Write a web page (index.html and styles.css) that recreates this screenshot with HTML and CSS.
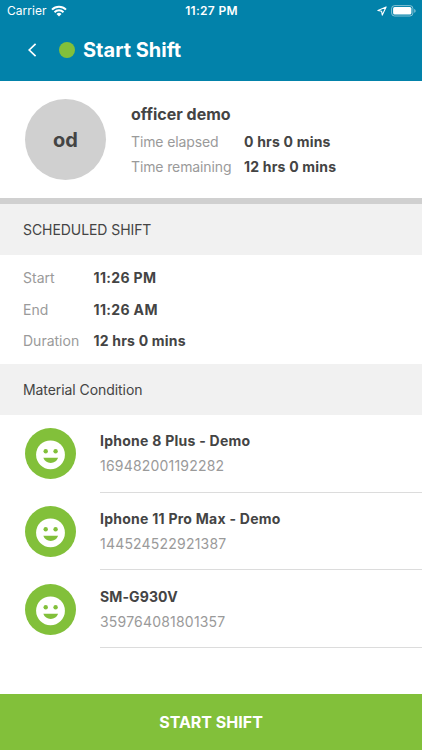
FILE: index.html
```html
<!DOCTYPE html>
<html lang="en">
<head>
<meta charset="utf-8">
<meta name="viewport" content="width=device-width, initial-scale=1">
<title>Start Shift</title>
<link rel="stylesheet" href="styles.css">
</head>
<body>
<svg class="defs" aria-hidden="true">
  <symbol id="face" viewBox="0 0 51 51">
    <circle cx="25.5" cy="25.5" r="25.5" fill="#82c03a"/>
    <circle cx="25.5" cy="26.8" r="14.4" fill="#fff"/>
    <circle cx="20.7" cy="23.3" r="2.2" fill="#82c03a"/>
    <circle cx="30.6" cy="23.3" r="2.2" fill="#82c03a"/>
    <path d="M18.3 29.7h14.8c-1.1 3.2-3.9 5.2-7.4 5.2s-6.3-2-7.4-5.2z" fill="#82c03a"/>
  </symbol>
</svg>
<div class="app">
  <header class="header">
    <div class="status">
      <div class="status-left"><span class="carrier">Carrier</span>
        <svg class="wifi" width="16" height="12" viewBox="0 0 16 12" fill="none" stroke="#fff" stroke-width="2"><path d="M1 4.6a10 10 0 0 1 14 0M3.5 7.2a6.4 6.4 0 0 1 9 0"/><path d="M8 11.6 5.5 9.1a3.5 3.5 0 0 1 5 0z" fill="#fff" stroke="none"/></svg>
      </div>
      <span class="clock">11:27 PM</span>
      <div class="status-right">
        <svg width="10" height="10" viewBox="0 0 10 10" fill="none" stroke="#fff" stroke-width="1.1" stroke-linejoin="round"><path d="M9.1.9.9 4.5l3.7.8.7 3.8z"/></svg>
        <svg width="25" height="12" viewBox="0 0 25 12"><rect x=".6" y=".6" width="21.3" height="10.4" rx="3" fill="none" stroke="#fff" stroke-opacity=".5"/><rect x="2.1" y="2.1" width="18.3" height="7.4" rx="1.5" fill="#fff"/><path d="M23.3 4v3.8c.8-.3 1.2-1 1.2-1.9s-.4-1.6-1.2-1.9z" fill="#fff" fill-opacity=".6"/></svg>
      </div>
    </div>
    <div class="nav">
      <svg class="back" width="9" height="14" viewBox="0 0 9 14" fill="none" stroke="#fff" stroke-width="1.7"><path d="M7.6.8 1.2 7l6.4 6.2"/></svg>
      <span class="dot"></span>
      <h1 class="title">Start Shift</h1>
    </div>
  </header>
  <section class="profile">
    <div class="avatar">od</div>
    <div class="info">
      <h2 class="name">officer demo</h2>
      <div class="stat"><span class="label">Time elapsed</span><span class="value">0 hrs 0 mins</span></div>
      <div class="stat"><span class="label">Time remaining</span><span class="value">12 hrs 0 mins</span></div>
    </div>
  </section>
  <h3 class="section">SCHEDULED SHIFT</h3>
  <section class="shift">
    <div class="row"><span class="label">Start</span><span class="value time">11:26 PM</span></div>
    <div class="row"><span class="label">End</span><span class="value time">11:26 AM</span></div>
    <div class="row"><span class="label">Duration</span><span class="value">12 hrs 0 mins</span></div>
  </section>
  <h3 class="section">Material Condition</h3>
  <ul class="devices">
    <li class="device"><svg class="face"><use href="#face"/></svg><div class="detail"><strong class="model">Iphone 8 Plus - Demo</strong><span class="serial">169482001192282</span></div></li>
    <li class="device"><svg class="face"><use href="#face"/></svg><div class="detail"><strong class="model">Iphone 11 Pro Max - Demo</strong><span class="serial">144524522921387</span></div></li>
    <li class="device"><svg class="face"><use href="#face"/></svg><div class="detail"><strong class="model short">SM-G930V</strong><span class="serial">359764081801357</span></div></li>
  </ul>
  <button class="submit">START SHIFT</button>
</div>
</body>
</html>
```
FILE: styles.css
```css
* { box-sizing: border-box; margin: 0; padding: 0; }
body { font-family: Inter, "Liberation Sans", sans-serif; font-size: 14px; color: #444; background: #fff; }
.defs { display: none; }
svg { display: block; flex: none; }
.app { width: 422px; height: 750px; display: flex; flex-direction: column; overflow: hidden; white-space: nowrap; }
.header { height: 81px; flex: none; background: #0282aa; color: #fff; }
.status { height: 22px; display: grid; grid-template-columns: 1fr auto 1fr; align-items: center; padding: 0 6px 0 7px; font-size: 12px; line-height: 22px; }
.status-left, .status-right { display: flex; align-items: center; }
.status-left { gap: 4px; }
.status-right { justify-content: flex-end; gap: 4px; }
.carrier { letter-spacing: .05px; }
.clock { font-weight: 600; letter-spacing: .3px; }
.nav { height: 56px; display: flex; align-items: center; padding-left: 28px; }
.dot { width: 16px; height: 16px; border-radius: 50%; background: #82c03a; margin: 0 8px 0 22px; }
.title { font-size: 20px; line-height: 26px; font-weight: 700; }
.profile { height: 123px; flex: none; border-bottom: 6px solid #d0d0d0; display: flex; padding: 18px 0 0 25px; }
.avatar { width: 81px; height: 81px; border-radius: 50%; background: #d0d0d0; font-size: 20px; font-weight: 700; line-height: 83px; text-align: center; margin-right: 25px; }
.name { font-size: 16px; line-height: 20px; margin: 5px 0 6px; font-weight: 700; }
.stat { height: 24.5px; line-height: 24px; display: flex; }
.stat .label { width: 113px; letter-spacing: -.12px; }
.label, .serial { color: #9a9a9a; }
.value { font-weight: 700; letter-spacing: .2px; }
.time { letter-spacing: .35px; }
.section { height: 51px; flex: none; background: #f1f1f1; padding-left: 23px; font-size: 14px; font-weight: 400; line-height: 51px; letter-spacing: -.07px; }
.shift { height: 109px; flex: none; padding: 7px 0 0 23px; }
.row { height: 31.6px; line-height: 32px; display: flex; }
.row .label { width: 70.5px; }
.devices { list-style: none; flex: 1; }
.device { height: 77.7px; display: flex; padding: 13.4px 0 0 25px; }
.face { width: 51px; height: 51px; margin-right: 24px; }
.detail { flex: 1; height: 64.3px; border-bottom: 1.5px solid #dcdcdc; display: flex; flex-direction: column; }
.model { line-height: 24px; margin-top: .9px; font-weight: 700; letter-spacing: .26px; }
.short { letter-spacing: .12px; }
.serial { line-height: 25px; letter-spacing: .2px; }
.submit { height: 56px; flex: none; border: 0; background: #82c03a; color: #fff; font: 700 16px/55px Inter, "Liberation Sans", sans-serif; }
```
